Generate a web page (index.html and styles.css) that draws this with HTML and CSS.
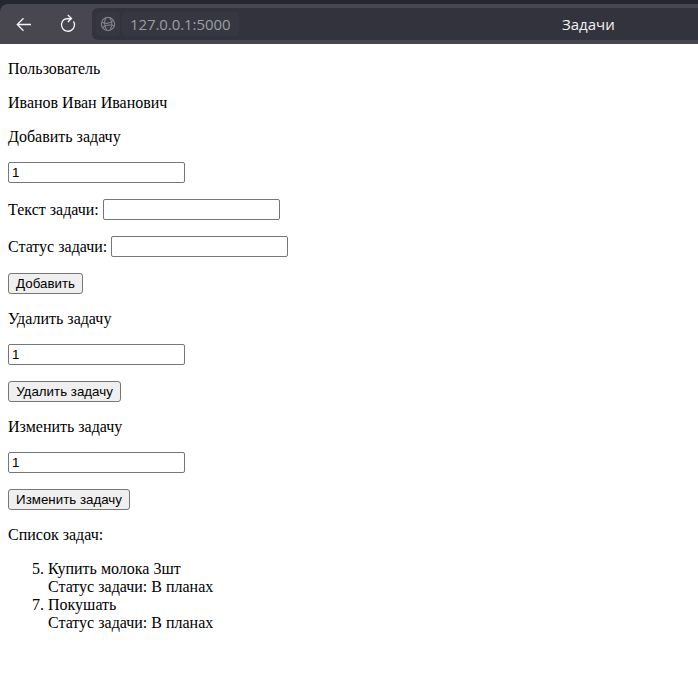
FILE: index.html
```html
<!DOCTYPE html>
<html lang="ru">
<head>
<meta charset="utf-8">
<title>Задачи</title>
<link rel="stylesheet" href="styles.css">
</head>
<body>
<header class="browser">
  <div class="toolbar">
    <svg class="nav-icon back" width="16" height="16" viewBox="0 0 16 16"><path d="M15 8.5H1.5M7.5 2.3L1.3 8.5l6.2 6.2"/></svg>
    <svg class="nav-icon reload" width="16" height="20" viewBox="0 0 16 20"><path d="M13.5 7.3A6.5 6.5 0 1 1 4 5.6C5.6 4.6 7.6 4.5 11.3 4.5M7.8 1l3.7 3.5L7.8 8" /></svg>
    <div class="address">
      <span class="site"><svg width="16" height="16" viewBox="0 0 16 16"><circle cx="8" cy="8" r="6.6"/><path d="M6 1.8C3.8 5 4.3 10 6.8 14.4M9.7 1.7c2.5 3.6 2.5 8.5.2 12.5M1.7 6.2c4 1.8 8.5 1.5 12-1.8M2.5 11.5C5.3 9 10.5 8.3 14.5 9.8"/></svg></span>
      <span class="url">127.0.0.1:5000</span>
      <span class="title">Задачи</span>
    </div>
  </div>
</header>
<main class="page">
  <p>Пользователь</p>
  <p>Иванов Иван Иванович</p>
  <p>Добавить задачу</p>
  <form>
    <p class="field"><input class="input" value="1"></p>
    <p class="field"><label for="text">Текст задачи:</label><input class="input" id="text"></p>
    <p class="field"><label for="status">Статус задачи:</label><input class="input" id="status"></p>
    <p class="field"><button class="button add" type="button">Добавить</button></p>
  </form>
  <p>Удалить задачу</p>
  <form>
    <p class="field"><input class="input" value="1"></p>
    <p class="field"><button class="button delete" type="button">Удалить задачу</button></p>
  </form>
  <p>Изменить задачу</p>
  <form>
    <p class="field"><input class="input" value="1"></p>
    <p class="field"><button class="button edit" type="button">Изменить задачу</button></p>
  </form>
  <p>Список задач:</p>
  <ol class="tasks">
    <li value="5">Купить молока 3шт<br>Статус задачи: В планах</li>
    <li value="7">Покушать<br>Статус задачи: В планах</li>
  </ol>
</main>
</body>
</html>
```
FILE: styles.css
```css
body {
  margin: 0;
  background: #fff;
  color: #000;
  font: 16px/18px "Liberation Serif", "Times New Roman", serif;
}

.browser {
  height: 44px;
  padding-top: 4px;
  box-sizing: border-box;
  background: #252730;
  overflow: hidden;
}

.toolbar {
  display: flex;
  align-items: center;
  height: 40px;
  padding-left: 16px;
  box-sizing: border-box;
  background: #484750;
  border-radius: 8px 0 0 0;
}

.toolbar svg {
  display: block;
  fill: none;
}

.nav-icon {
  stroke: #f4f4f5;
  stroke-width: 1.3;
}

.reload {
  margin-left: 28px;
}

.address {
  display: flex;
  align-items: center;
  flex: 1;
  height: 32px;
  margin-left: 16px;
  padding-left: 4px;
  background: #33333d;
  border-radius: 6px 0 0 6px;
  font: 16px/24px "Open Sans", "Noto Sans", sans-serif;
}

.site {
  display: flex;
  align-items: center;
  justify-content: center;
  width: 24px;
  height: 24px;
  background: #363741;
  border-radius: 4px;
}

.site svg {
  stroke: #7e7f89;
  stroke-width: 1.2;
}

.url {
  width: 117px;
  height: 24px;
  margin-left: 2px;
  padding-left: 8px;
  box-sizing: border-box;
  background: #363741;
  border-radius: 4px;
  color: #9c9da4;
  font-size: 15px;
  letter-spacing: -0.08px;
}

.title {
  margin-left: 323px;
  color: #f2f2f3;
  font-size: 15px;
}

.page {
  padding: 0 8px;
}

.page p,
.tasks {
  margin: 16px 0;
}

.field {
  display: flex;
  align-items: center;
  gap: 4px;
  height: 21px;
}

.input {
  width: 177px;
  height: 21px;
  padding: 1px 3px;
  box-sizing: border-box;
  border: 1px solid #767676;
  border-radius: 2px;
  background: #fff;
  color: #000;
  font: 13.333px "Liberation Sans", Arial, sans-serif;
}

.button {
  height: 21px;
  padding: 0;
  border: 1px solid #767676;
  border-radius: 3px;
  background: #efefef;
  color: #000;
  font: 13.333px "Liberation Sans", Arial, sans-serif;
  white-space: nowrap;
}

.add {
  width: 75px;
}

.delete {
  width: 113px;
}

.edit {
  width: 122px;
}

.tasks {
  padding-left: 40px;
}
```
